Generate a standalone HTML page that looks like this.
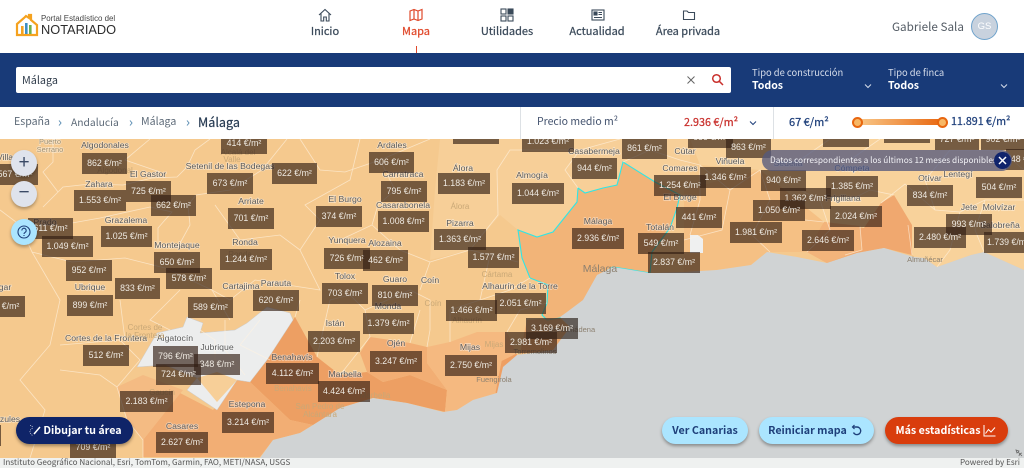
<!DOCTYPE html>
<html lang="es"><head><meta charset="utf-8"><title>Portal Estadístico del Notariado</title>
<style>
*{box-sizing:border-box}
html,body{margin:0;padding:0;width:1024px;height:468px;overflow:hidden;background:#fff;font-family:"Liberation Sans",sans-serif}
.a{position:absolute;white-space:nowrap;line-height:14px}
.u{font-family:"Noto Sans CJK JP","Liberation Sans",sans-serif}
.n{position:absolute;top:24px;line-height:14px;font-family:"Noto Sans CJK JP","Liberation Sans",sans-serif;font-size:11px;color:#3b4a5a;-webkit-text-stroke:.25px;transform:translateX(-50%);white-space:nowrap}
.ic{position:absolute;top:8px}
#map{position:absolute;left:0;top:139px;width:1024px;height:329px;overflow:hidden}
#map b{position:absolute;display:block;font-weight:400;height:21px;line-height:21px;text-align:center;font-size:8.800px;color:#efeae2;background:rgba(50,30,20,.66);white-space:nowrap}
.btn{position:absolute;top:417px;height:27px;border-radius:14px;line-height:27px;text-align:center;font-family:"Noto Sans CJK JP","Liberation Sans",sans-serif;font-size:10.700px;font-weight:700;color:#1e3f7a;background:#abe5ff;box-shadow:0 2px 3px rgba(0,0,0,.35);white-space:nowrap}
.circ{position:absolute;left:11px;width:26px;height:26px;border-radius:50%;background:#dfe3ec;box-shadow:0 2px 3px rgba(0,0,0,.3);color:#3b4a66;text-align:center}
</style></head><body>

<svg class="a" style="left:15px;top:13px" width="24" height="24" viewBox="0 0 24 24"><path d="M2 22V11L9 5l2-2 3 2V2h2v5l6 5v10z" fill="none" stroke="#f5a21f" stroke-width="2.200"/><rect x="6" y="13" width="2.600" height="8" fill="#f5a21f"/><rect x="10" y="10" width="2.600" height="11" fill="#3d8fc4"/><rect x="14" y="12" width="2.600" height="9" fill="#6fb04a"/></svg>
<div class="a" style="left:41px;top:12px;font-size:7.900px;color:#444">Portal Estadístico del</div>
<div class="a" style="left:41px;top:23px;font-size:12.800px;color:#2c2c2c">NOTARIADO</div>

<svg class="ic" style="left:318px" width="14" height="14" viewBox="0 0 14 14" fill="none" stroke="#3b4a5a" stroke-width="1.100"><path d="M1 7L7 1.500 13 7M3 5.500V13H5.700V9H8.300V13H11V5.500"/></svg>
<svg class="ic" style="left:409px" width="14" height="14" viewBox="0 0 14 14" fill="none" stroke="#e0492b" stroke-width="1.200"><path d="M1 3L5 1.500 9 3l4-1.500V11L9 12.500 5 11 1 12.500zM5 1.500V11M9 3V12.500"/></svg>
<svg class="ic" style="left:500px" width="14" height="14" viewBox="0 0 14 14" fill="none" stroke="#3b4a5a" stroke-width="1.100"><rect x="1" y="1" width="5" height="5"/><rect x="8" y="1" width="5" height="5" fill="#3b4a5a"/><rect x="1" y="8" width="5" height="5"/><rect x="8" y="8" width="5" height="5"/></svg>
<svg class="ic" style="left:591px" width="14" height="14" viewBox="0 0 14 14" fill="none" stroke="#3b4a5a" stroke-width="1.100"><rect x="1" y="2" width="12" height="10"/><rect x="3" y="4" width="3" height="3" fill="#3b4a5a"/><path d="M7.500 4.500H11M7.500 6.500H11M3 9.500H11"/></svg>
<svg class="ic" style="left:682px" width="14" height="14" viewBox="0 0 14 14" fill="none" stroke="#3b4a5a" stroke-width="1.100"><path d="M1.500 3V11.500H12.500V4.500H6.500L5 3z"/></svg>

<div class="n" style="left:325px">Inicio</div>
<div class="n" style="left:416px;color:#e0492b">Mapa</div>
<div class="n" style="left:507px">Utilidades</div>
<div class="n" style="left:597px">Actualidad</div>
<div class="n" style="left:688px">Área privada</div>
<div class="a" style="left:416px;top:46px;width:1px;height:7px;background:#e0492b"></div>

<div class="a u" style="left:892px;top:20px;font-size:11.700px;color:#555d66">Gabriele Sala</div>
<div class="a" style="left:971px;top:13px;width:27px;height:27px;border-radius:50%;background:#c8d2de;border:1px solid #6fa3cc;color:#fff;font-size:9.500px;line-height:25px;text-align:center">GS</div>

<div class="a" style="left:0;top:53px;width:1024px;height:54px;background:#183a78"></div>
<div class="a" style="left:16px;top:67px;width:715px;height:26px;background:#fff;border-radius:2px"></div>
<div class="a u" style="left:22px;top:73px;font-size:10.800px;color:#2f3b4a">Málaga</div>
<svg class="a" style="left:686px;top:75px" width="10" height="10" viewBox="0 0 10 10" stroke="#666" stroke-width="1"><path d="M1.500 1.500L8.500 8.500M8.500 1.500L1.500 8.500"/></svg>
<svg class="a" style="left:711px;top:73px" width="13" height="13" viewBox="0 0 13 13" fill="none" stroke="#c9302c" stroke-width="1.500"><circle cx="5.500" cy="5.500" r="3.800"/><path d="M8.300 8.300L12 12"/></svg>
<div class="a u" style="left:752px;top:65px;font-size:9.400px;color:#d5dcea">Tipo de construcción</div>
<div class="a u" style="left:752px;top:79px;font-size:10.600px;font-weight:700;color:#fff">Todos</div>
<svg class="a" style="left:864px;top:83px" width="8" height="6" viewBox="0 0 8 6" fill="none" stroke="#d5dcea" stroke-width="1"><path d="M1 1.500L4 4.500 7 1.500"/></svg>
<div class="a u" style="left:888px;top:65px;font-size:9.400px;color:#d5dcea">Tipo de finca</div>
<div class="a u" style="left:888px;top:79px;font-size:10.600px;font-weight:700;color:#fff">Todos</div>
<svg class="a" style="left:1000px;top:83px" width="8" height="6" viewBox="0 0 8 6" fill="none" stroke="#d5dcea" stroke-width="1"><path d="M1 1.500L4 4.500 7 1.500"/></svg>

<div class="a u" style="left:14px;top:115px;font-size:10.600px;color:#5d6a78">España</div>
<svg class="a" style="left:58px;top:120px" width="4" height="6" viewBox="0 0 4 6" fill="none" stroke="#5f90b5"><path d="M1 .5L3 3 1 5.500"/></svg>
<div class="a u" style="left:71px;top:115px;font-size:10.300px;color:#5d6a78">Andalucía</div>
<svg class="a" style="left:129px;top:120px" width="4" height="6" viewBox="0 0 4 6" fill="none" stroke="#5f90b5"><path d="M1 .5L3 3 1 5.500"/></svg>
<div class="a u" style="left:141px;top:115px;font-size:10.600px;color:#5d6a78">Málaga</div>
<svg class="a" style="left:186px;top:120px" width="4" height="6" viewBox="0 0 4 6" fill="none" stroke="#5f90b5"><path d="M1 .5L3 3 1 5.500"/></svg>
<div class="a u" style="left:198px;top:115px;font-size:12.600px;color:#263a52;-webkit-text-stroke:.2px">Málaga</div>
<div class="a" style="left:520px;top:107px;width:1px;height:32px;background:#dde1e5"></div>
<div class="a" style="left:773px;top:107px;width:1px;height:32px;background:#dde1e5"></div>
<div class="a u" style="left:537px;top:115px;font-size:10.500px;color:#45546f">Precio medio m²</div>
<div class="a u" style="left:684px;top:115px;font-size:10.800px;color:#c9302c;-webkit-text-stroke:.25px">2.936 €/m²</div>
<svg class="a" style="left:749px;top:120px" width="8" height="6" viewBox="0 0 8 6" fill="none" stroke="#1e3f7a" stroke-width="1"><path d="M1 1.500L4 4.500 7 1.500"/></svg>
<div class="a u" style="left:789px;top:115px;font-size:11px;color:#1e3f7a;-webkit-text-stroke:.25px">67 €/m²</div>
<div class="a" style="left:857px;top:119px;width:86px;height:6px;background:linear-gradient(90deg,#f9c98a,#e8660f)"></div>
<div class="a" style="left:852px;top:117px;width:11px;height:11px;border-radius:50%;background:#f7b765;border:2.500px solid #e8660f"></div>
<div class="a" style="left:937px;top:117px;width:11px;height:11px;border-radius:50%;background:#f7b765;border:2.500px solid #e8660f"></div>
<div class="a u" style="left:951px;top:115px;font-size:10.700px;color:#1e3f7a;-webkit-text-stroke:.25px">11.891 €/m²</div>

<div id="map">
<svg class="a" style="left:0;top:-139px" width="1024" height="468" viewBox="0 0 1024 468">
<rect x="0" y="139" width="1024" height="329" fill="#f5c98e"/>
<path d="M440 139H690V180L655 182 623 162 617 185 585 193 578 188 577 202 553 232 537 237 518 230 500 215 470 250 430 260 435 190z" fill="#f7cf98"/>
<path d="M690 139H1024V270L984 252 971 255 937 267 924 258 914 257 881 203 864 228 824 222 760 170 700 165z" fill="#f8d29b"/>
<path d="M684 190L760 170 824 222 807 252 767 252 751 265 717 270 684 272z" fill="#f5c084"/>
<path d="M894 195L912 225 912 255 884 248 857 253 827 263 807 252 824 222 864 228 881 203z" fill="#f0a86f"/>
<path d="M807 252L824 222 860 226 862 250 827 263z" fill="#f3b47b"/>
<path d="M518 230L522 258 530 278 548 285 547 303 542 315 547 320 560 318 570 312 585 300 597 277 613 267 650 273 652 252 670 228 677 208 680 195 655 182 623 162 617 185 603 188 585 193 578 188 577 202 553 232 537 237z" fill="#f2b478" stroke="#2fe6e6" stroke-width="1.100"/>
<path d="M295 317L317 357 340 375 367 372 383 382 410 375 447 390 445 412 407 403 373 398 340 408 313 425 290 420 250 382 267 360z" fill="#ed9f63"/>
<path d="M250 382L290 420 313 425 300 433 273 440 260 457H143L143 440 180 393 213 410 237 380z" fill="#f2ae74"/>
<path d="M117 387L143 375 183 390 143 440 127 420z" fill="#f4bb83"/>
<path d="M137 367L157 333 183 327 187 317 203 323 200 333 235 330 247 323 267 307 290 313 293 320 267 360 250 382 237 380 217 410 187 390 197 378 165 365z" fill="#eceded" stroke="#ccc" stroke-width=".5"/>
<path d="M197 378L217 372 237 380 217 402z" fill="#f7cf98"/>
<path d="M370 337L410 343 427 347 427 363 447 390 410 375 383 382 367 372 360 353z" fill="#f2ae74"/>
<path d="M427 347L450 342 477 332 507 332 517 355 503 367 497 393 473 400 457 410 445 412 447 390 427 363z" fill="#f5b980"/>
<path d="M517 355L503 367 497 393 503 362z" fill="#ee9f63" stroke="#ee9f63" stroke-width="3"/>
<path d="M690 235h8l5 4v14h-13z" fill="#eff0f0"/>
<path d="M1024 270L984 252 971 255 937 267 924 258 914 257 884 248 857 253 827 263 797 257 767 252 751 265 717 270 684 272 650 273 613 267 597 275 583 300 567 312 560 317 570 327 553 350 517 355 503 367 497 393 473 400 457 410 443 412 407 403 373 398 340 408 313 425 300 433 273 440 260 458H1024z" fill="#d0d3d4"/>
<path d="M527 320L560 318 570 327 553 350 520 354z" fill="#e79a5f" opacity=".6"/>
<g fill="none" stroke="#fff3e2" stroke-width=".8" opacity=".65">
<path d="M43 207L58 192 63 187 90 184 123 185 152 178 177 177 187 167 195 150 210 139"/>
<path d="M53 139V162L43 172 58 192"/>
<path d="M72 223L100 218 150 207 172 212 158 228 158 246 178 247 190 225 188 205 196 195 230 190 262 170 287 139"/>
<path d="M0 210L20 225 32 252 72 262 125 258 165 268 212 290 230 300 255 280 320 290 300 250 320 220 305 205 350 180 360 139"/>
<path d="M32 252L60 300 50 345 20 380 45 410 30 458"/>
<path d="M60 345L120 340 140 360 117 387 100 375 60 370"/>
<path d="M117 387L127 420 143 440 143 458"/>
<path d="M120 300L125 340M212 290L230 320"/>
<path d="M300 300L295 317M330 300L317 357M340 375L370 337 365 310 350 295 330 300"/>
<path d="M365 310L410 290 430 300 430 330 427 347M410 343L420 310"/>
<path d="M340 240L372 225 378 205 395 190 380 160 430 139M372 225L400 250 430 262 420 290"/>
<path d="M430 262L470 250 498 215 497 170 510 150 580 150 620 139"/>
<path d="M470 250L490 255 518 262M490 255L480 300 450 310 450 342M480 300L510 290 530 278"/>
<path d="M507 332L520 310 547 303M580 150L565 170 578 188"/>
<path d="M623 162L650 150 680 160 700 165 700 200 690 235"/>
<path d="M700 165L730 190 760 170 770 200 752 235 770 252M730 190L722 230 684 240"/>
<path d="M805 220L824 222M800 190L820 200 830 230 807 252M860 226L862 250 845 255"/>
<path d="M881 203L905 184 935 210 960 212 950 250 937 267M935 210L925 180 950 150 1000 150 1024 170M960 212L985 200 1024 200M985 200L975 230 984 252"/>
<path d="M894 195L870 190 850 200M850 160L880 139M800 160L830 139M912 255L908 225"/>
<path d="M150 139L125 160 160 172M300 139L320 170 345 172 380 160"/>
<path d="M215 205L240 240 280 235 300 250M180 290L150 320 170 330"/>
<path d="M225 320V350L245 375M260 320L240 345 270 360M200 330L215 340 215 365"/>
</g>
<g font-family="Liberation Sans,sans-serif" font-size="8.700" fill="#5a5a5a" stroke="#fff" stroke-width="1.400" stroke-opacity=".45" paint-order="stroke" text-anchor="middle">
<text x="50" y="144" fill="#a09070" font-size="7.500">Puerto</text><text x="50" y="152" fill="#a09070" font-size="7.500">Serrano</text>
<text x="105" y="148">Algodonales</text><text x="5" y="160">Villa</text><text x="148" y="177">El Gastor</text><text x="230" y="169">Setenil de las Bodegas</text>
<text x="99" y="187">Zahara</text><text x="251" y="204">Arriate</text><text x="45" y="225">Prado</text><text x="126" y="223">Grazalema</text>
<text x="177" y="248">Montejaque</text><text x="245" y="245">Ronda</text><text x="345" y="202">El Burgo</text><text x="392" y="148">Ardales</text>
<text x="403" y="177">Carratraca</text><text x="403" y="208">Casarabonela</text><text x="463" y="171">Álora</text><text x="532" y="178">Almogía</text>
<text x="594" y="154">Casabermeja</text><text x="460" y="226">Pizarra</text><text x="347" y="243">Yunquera</text><text x="385" y="246">Alozaina</text>
<text x="345" y="279">Tolox</text><text x="395" y="282">Guaro</text><text x="430" y="283">Coín</text><text x="520" y="289">Alhaurín de la Torre</text>
<text x="90" y="290">Ubrique</text><text x="241" y="289">Cartajima</text><text x="276" y="286">Parauta</text><text x="106" y="341">Cortes de la Frontera</text>
<text x="175" y="341">Algatocín</text><text x="217" y="350">Jubrique</text><text x="292" y="360">Benahavís</text><text x="335" y="326">Istán</text>
<text x="388" y="309">Monda</text><text x="396" y="346">Ojén</text><text x="345" y="377">Marbella</text><text x="247" y="407">Estepona</text>
<text x="182" y="429">Casares</text><text x="470" y="350">Mijas</text><text x="5" y="290">gar</text><text x="10" y="422">zules</text>
<text x="598" y="224">Málaga</text><text x="660" y="230">Totalán</text><text x="685" y="154">Cútar</text><text x="680" y="171">Comares</text>
<text x="680" y="200">El Borge</text><text x="730" y="164">Viñuela</text><text x="788" y="166">Sedella</text><text x="852" y="171" fill="#2f4570">Cómpeta</text>
<text x="843" y="201">Frigiliana</text><text x="930" y="181">Otívar</text><text x="958" y="177">Lentegí</text><text x="969" y="210">Jete</text>
<text x="999" y="210">Molvízar</text><text x="1000" y="228">Salobreña</text>
<g fill="#c9a877" stroke="none" font-size="8">
<text x="145" y="330">Cortes de</text><text x="145" y="338">la Frontera</text><text x="293" y="391">Benahavís</text><text x="320" y="409">San Pedro de</text><text x="320" y="417">Alcántara</text>
<text x="460" y="209">Álora</text><text x="497" y="277">Cártama</text><text x="433" y="306">Coín</text><text x="467" y="323">Alhaurín</text><text x="494" y="347">Mijas</text><text x="375" y="398">Marbella</text>
<text x="238" y="155">Alcalá del</text><text x="232" y="162">Valle</text><text x="115" y="173">Algodonal</text><text x="240" y="257">Ronda</text><text x="162" y="395">Gaucín</text>
</g>
<g fill="#8c8070" stroke="none">
<text x="600" y="272" font-size="10.500">Málaga</text><text x="494" y="382" font-size="7.500">Fuengirola</text><text x="535" y="354" font-size="7.500">Torremolinos</text><text x="925" y="262" font-size="7.500">Almuñécar</text><text x="572" y="332" font-size="7.500">Benalmádena</text>
</g>
</g>
</svg>

<b style="left:-8px;top:25px;width:46px">567 €/m²</b>
<b style="left:82px;top:14px;width:45px">862 €/m²</b>
<b style="left:221px;top:-6px;width:46px">414 €/m²</b>
<b style="left:272px;top:24px;width:45px">622 €/m²</b>
<b style="left:207px;top:34px;width:46px">673 €/m²</b>
<b style="left:126px;top:42px;width:45px">725 €/m²</b>
<b style="left:74px;top:51px;width:52px">1.553 €/m²</b>
<b style="left:151px;top:56px;width:45px">662 €/m²</b>
<b style="left:228px;top:69px;width:46px">701 €/m²</b>
<b style="left:316px;top:67px;width:46px">374 €/m²</b>
<b style="left:28px;top:79px;width:45px">611 €/m²</b>
<b style="left:101px;top:87px;width:51px">1.025 €/m²</b>
<b style="left:42px;top:97px;width:51px">1.049 €/m²</b>
<b style="left:154px;top:113px;width:46px">650 €/m²</b>
<b style="left:220px;top:110px;width:52px">1.244 €/m²</b>
<b style="left:166px;top:129px;width:46px">578 €/m²</b>
<b style="left:324px;top:109px;width:46px">726 €/m²</b>
<b style="left:66px;top:121px;width:46px">952 €/m²</b>
<b style="left:115px;top:139px;width:45px">833 €/m²</b>
<b style="left:322px;top:144px;width:46px">703 €/m²</b>
<b style="left:253px;top:151px;width:46px">620 €/m²</b>
<b style="left:188px;top:158px;width:45px">589 €/m²</b>
<b style="left:67px;top:156px;width:46px">899 €/m²</b>
<b style="left:-21px;top:157px;width:46px">768 €/m²</b>
<b style="left:83px;top:206px;width:46px">512 €/m²</b>
<b style="left:153px;top:207px;width:45px">796 €/m²</b>
<b style="left:194px;top:215px;width:46px">348 €/m²</b>
<b style="left:156px;top:225px;width:45px">724 €/m²</b>
<b style="left:266px;top:224px;width:53px">4.112 €/m²</b>
<b style="left:308px;top:192px;width:52px">2.203 €/m²</b>
<b style="left:318px;top:242px;width:52px">4.424 €/m²</b>
<b style="left:120px;top:252px;width:53px">2.183 €/m²</b>
<b style="left:222px;top:273px;width:52px">3.214 €/m²</b>
<b style="left:156px;top:293px;width:52px">2.627 €/m²</b>
<b style="left:70px;top:298px;width:46px">709 €/m²</b>
<b style="left:-46px;top:286px;width:47px">783 €/m²</b>
<b style="left:453px;top:-16px;width:46px">510 €/m²</b>
<b style="left:522px;top:-8px;width:52px">1.023 €/m²</b>
<b style="left:622px;top:-1px;width:45px">861 €/m²</b>
<b style="left:369px;top:13px;width:45px">606 €/m²</b>
<b style="left:572px;top:19px;width:45px">944 €/m²</b>
<b style="left:381px;top:42px;width:46px">795 €/m²</b>
<b style="left:438px;top:34px;width:52px">1.183 €/m²</b>
<b style="left:512px;top:44px;width:52px">1.044 €/m²</b>
<b style="left:654px;top:36px;width:52px">1.254 €/m²</b>
<b style="left:378px;top:72px;width:51px">1.008 €/m²</b>
<b style="left:434px;top:90px;width:52px">1.363 €/m²</b>
<b style="left:468px;top:108px;width:51px">1.577 €/m²</b>
<b style="left:363px;top:111px;width:45px">462 €/m²</b>
<b style="left:572px;top:89px;width:52px">2.936 €/m²</b>
<b style="left:638px;top:94px;width:46px">549 €/m²</b>
<b style="left:648px;top:113px;width:52px">2.837 €/m²</b>
<b style="left:372px;top:146px;width:46px">810 €/m²</b>
<b style="left:495px;top:154px;width:51px">2.051 €/m²</b>
<b style="left:446px;top:161px;width:51px">1.466 €/m²</b>
<b style="left:363px;top:174px;width:51px">1.379 €/m²</b>
<b style="left:526px;top:179px;width:52px;background:rgba(45,35,30,.68)">3.169 €/m²</b>
<b style="left:505px;top:193px;width:52px">2.981 €/m²</b>
<b style="left:370px;top:212px;width:52px">3.247 €/m²</b>
<b style="left:445px;top:216px;width:52px">2.750 €/m²</b>
<b style="left:688px;top:-12px;width:45px">686 €/m²</b>
<b style="left:726px;top:-2px;width:45px">863 €/m²</b>
<b style="left:823px;top:-13px;width:46px">265 €/m²</b>
<b style="left:884px;top:-17px;width:46px">512 €/m²</b>
<b style="left:935px;top:-10px;width:44px">727 €/m²</b>
<b style="left:981px;top:-10px;width:44px">902 €/m²</b>
<b style="left:1006px;top:10px;width:46px;text-align:left">748 €/m²</b>
<b style="left:700px;top:28px;width:51px">1.346 €/m²</b>
<b style="left:761px;top:31px;width:45px">940 €/m²</b>
<b style="left:826px;top:37px;width:52px">1.385 €/m²</b>
<b style="left:780px;top:49px;width:51px">1.362 €/m²</b>
<b style="left:976px;top:38px;width:46px">504 €/m²</b>
<b style="left:907px;top:46px;width:46px">834 €/m²</b>
<b style="left:753px;top:61px;width:52px">1.050 €/m²</b>
<b style="left:830px;top:67px;width:52px">2.024 €/m²</b>
<b style="left:676px;top:68px;width:46px">441 €/m²</b>
<b style="left:946px;top:75px;width:46px">993 €/m²</b>
<b style="left:730px;top:83px;width:52px">1.981 €/m²</b>
<b style="left:802px;top:91px;width:52px">2.646 €/m²</b>
<b style="left:914px;top:88px;width:52px">2.480 €/m²</b>
<b style="left:984px;top:93px;width:52px;text-align:left;padding-left:3px">1.739 €/m²</b>

<div class="a u" style="left:762px;top:11px;width:250px;height:21px;border-radius:11px;background:rgba(85,90,125,.78);color:#f2f2f6;font-size:8.300px;line-height:21px;padding-left:8px">Datos correspondientes a los últimos 12 meses disponibles</div>
<div class="a" style="left:994px;top:13px;width:17px;height:17px;border-radius:50%;background:#10246c"><svg width="17" height="17" viewBox="0 0 17 17" stroke="#fff" stroke-width="1.500"><path d="M5 5L12 12M12 5L5 12"/></svg></div>
<div class="a u" style="left:0;top:319px;width:1024px;height:10px;background:#eff1f0;font-size:8.100px;line-height:10px;color:#555;padding-left:3px">Instituto Geográfico Nacional, Esri, TomTom, Garmin, FAO, METI/NASA, USGS</div>
<div class="a u" style="right:4px;top:319px;font-size:8.100px;line-height:10px;color:#555">Powered by Esri</div>
</div>

<div class="circ" style="top:150px;font-size:19px;line-height:25px">+</div>
<div class="circ" style="top:181px;font-size:19px;line-height:24px">−</div>
<div class="circ" style="top:219px;background:#abe5ff"><svg width="26" height="26" viewBox="0 0 26 26" fill="none" stroke="#1e3f7a" stroke-width="1.100"><circle cx="13" cy="13" r="6"/><path d="M10.800 11.500a2.200 2.200 0 1 1 3.400 1.800c-.8.500-1.200 1-1.200 1.700M13 16v1"/></svg></div>

<div class="btn" style="left:16px;width:117px;background:#0f2468;color:#fff;padding-left:16px">
<svg style="position:absolute;left:13px;top:7px" width="13" height="13" viewBox="0 0 13 13" fill="none" stroke="#fff" stroke-width="1.500"><path d="M5 10L11 3"/><path d="M1 1.500c3 0 3 3 1 4s-1 5 2 6" stroke-width=".6" stroke-dasharray="1 1"/></svg>Dibujar tu área</div>
<div class="btn" style="left:662px;width:86px">Ver Canarias</div>
<div class="btn" style="left:759px;width:115px;padding-right:18px">Reiniciar mapa<svg style="position:absolute;left:91px;top:7px" width="13" height="13" viewBox="0 0 13 13" fill="none" stroke="#1e3f7a" stroke-width="1.400"><path d="M3.500 3H7a3.800 3.800 0 1 1-3.500 5.500"/><path d="M4.500 1L2.500 3l2 2" stroke-width="1.200"/></svg></div>
<div class="btn" style="left:885px;width:123px;background:#d93d0d;color:#fff;padding-right:17px">Más estadísticas<svg style="position:absolute;left:98px;top:7px" width="13" height="13" viewBox="0 0 13 13" fill="none" stroke="#fff" stroke-width="1"><path d="M1 1V12H12.500M2.500 9.500L5.500 5.500 8 8l4-4.500"/></svg></div>
<svg class="a" style="left:1015px;top:449px" width="8" height="8" viewBox="0 0 8 8" fill="none" stroke="#666" stroke-width=".8"><path d="M1 1L4 2 2 4zM3 3L7 7M5 4.500L7 4M4.500 5L4 7"/></svg>

</body></html>
